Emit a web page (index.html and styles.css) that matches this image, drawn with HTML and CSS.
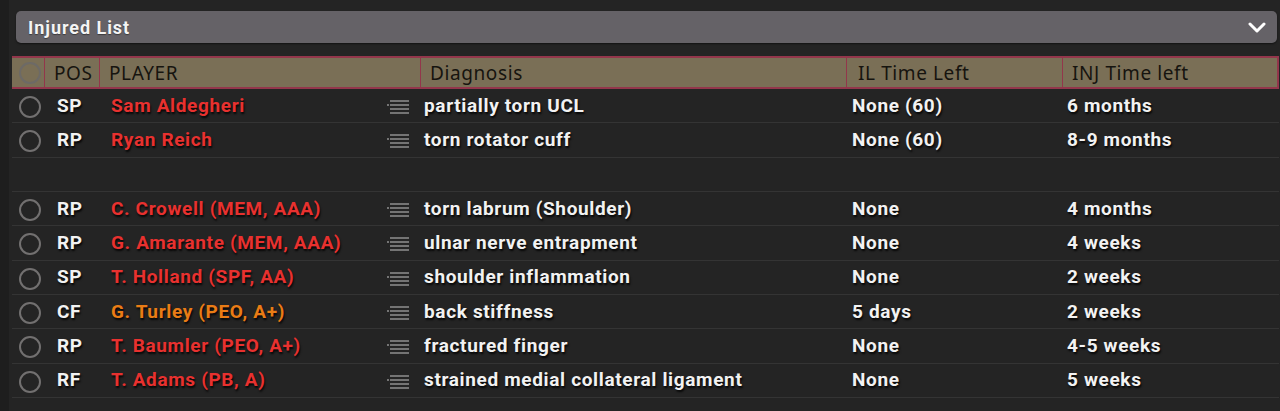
FILE: index.html
```html
<!DOCTYPE html>
<html>
<head>
<meta charset="utf-8">
<link rel="stylesheet" href="styles.css">
</head>
<body>
<div class="page">
  <div class="panel-bar">
    <span class="panel-title">Injured List</span>
    <svg class="chev" width="18" height="12" viewBox="0 0 18 12"><path d="M2 2 L9 9 L16 2" fill="none" stroke="#fff" stroke-width="3" stroke-linecap="round" stroke-linejoin="round"/></svg>
  </div>
  <div class="table">
    <div class="thead">
      <div class="th th-sel"><span class="radio radio-h"></span></div>
      <div class="th">POS</div>
      <div class="th">PLAYER</div>
      <div class="th">Diagnosis</div>
      <div class="th th-il">IL Time Left</div>
      <div class="th">INJ Time left</div>
    </div>

    <div class="row">
      <div class="c c-sel"><span class="radio"></span></div>
      <div class="c c-pos">SP</div>
      <div class="c c-name"><span class="red">Sam Aldegheri</span><span class="drag"><i></i><i></i><i></i><i></i></span></div>
      <div class="c c-diag">partially torn UCL</div>
      <div class="c c-il">None (60)</div>
      <div class="c c-inj">6 months</div>
    </div>
    <div class="row">
      <div class="c c-sel"><span class="radio"></span></div>
      <div class="c c-pos">RP</div>
      <div class="c c-name"><span class="red">Ryan Reich</span><span class="drag"><i></i><i></i><i></i><i></i></span></div>
      <div class="c c-diag">torn rotator cuff</div>
      <div class="c c-il">None (60)</div>
      <div class="c c-inj">8-9 months</div>
    </div>
    <div class="row row-empty"></div>
    <div class="row">
      <div class="c c-sel"><span class="radio"></span></div>
      <div class="c c-pos">RP</div>
      <div class="c c-name"><span class="red">C. Crowell (MEM, AAA)</span><span class="drag"><i></i><i></i><i></i><i></i></span></div>
      <div class="c c-diag">torn labrum (Shoulder)</div>
      <div class="c c-il">None</div>
      <div class="c c-inj">4 months</div>
    </div>
    <div class="row">
      <div class="c c-sel"><span class="radio"></span></div>
      <div class="c c-pos">RP</div>
      <div class="c c-name"><span class="red">G. Amarante (MEM, AAA)</span><span class="drag"><i></i><i></i><i></i><i></i></span></div>
      <div class="c c-diag">ulnar nerve entrapment</div>
      <div class="c c-il">None</div>
      <div class="c c-inj">4 weeks</div>
    </div>
    <div class="row">
      <div class="c c-sel"><span class="radio"></span></div>
      <div class="c c-pos">SP</div>
      <div class="c c-name"><span class="red">T. Holland (SPF, AA)</span><span class="drag"><i></i><i></i><i></i><i></i></span></div>
      <div class="c c-diag">shoulder inflammation</div>
      <div class="c c-il">None</div>
      <div class="c c-inj">2 weeks</div>
    </div>
    <div class="row">
      <div class="c c-sel"><span class="radio"></span></div>
      <div class="c c-pos">CF</div>
      <div class="c c-name"><span class="orange">G. Turley (PEO, A+)</span><span class="drag"><i></i><i></i><i></i><i></i></span></div>
      <div class="c c-diag">back stiffness</div>
      <div class="c c-il">5 days</div>
      <div class="c c-inj">2 weeks</div>
    </div>
    <div class="row">
      <div class="c c-sel"><span class="radio"></span></div>
      <div class="c c-pos">RP</div>
      <div class="c c-name"><span class="red">T. Baumler (PEO, A+)</span><span class="drag"><i></i><i></i><i></i><i></i></span></div>
      <div class="c c-diag">fractured finger</div>
      <div class="c c-il">None</div>
      <div class="c c-inj">4-5 weeks</div>
    </div>
    <div class="row">
      <div class="c c-sel"><span class="radio"></span></div>
      <div class="c c-pos">RF</div>
      <div class="c c-name"><span class="red">T. Adams (PB, A)</span><span class="drag"><i></i><i></i><i></i><i></i></span></div>
      <div class="c c-diag">strained medial collateral ligament</div>
      <div class="c c-il">None</div>
      <div class="c c-inj">5 weeks</div>
    </div>
  </div>
</div>
</body>
</html>
```

FILE: styles.css
```css
* { box-sizing: border-box; }
html, body {
  margin: 0;
  padding: 0;
  background: #242424;
  height: 411px;
  overflow: hidden;
}
.page {
  border-left: 9px solid #1e1e1e;
  height: 411px;
  padding: 11px 1px 0 3px;
  font-family: Roboto, "Liberation Sans", sans-serif;
}
.panel-bar {
  margin-left: 4px;
  margin-right: 2px;
  height: 32px;
  background: #656267;
  border-radius: 5px;
  box-shadow: 0 1px 2px rgba(0,0,0,0.5);
  display: flex;
  align-items: center;
  justify-content: space-between;
  padding: 0 12px 0 12px;
}
.panel-title {
  color: #f4f4f4;
  font-weight: 700;
  font-size: 18px;
  letter-spacing: 0.95px;
  text-shadow: 0 1px 1px rgba(0,0,0,0.4);
}
.chev { display: block; margin-top: 1px; margin-right: -1px; }

.table { margin-top: 13px; }
.thead, .row {
  display: grid;
  grid-template-columns: 32px 55px 321px 426px 216px 1fr;
}
.thead {
  height: 33px;
  background: #7a6f56;
  border-top: 2px solid #93364b;
  border-bottom: 2px solid #93364b;
  border-right: 2px solid #93364b;
}
.th {
  display: flex;
  align-items: center;
  padding-left: 9px;
  font-family: "Noto Sans", "Open Sans", sans-serif;
  font-size: 19px;
  letter-spacing: 0.6px;
  color: #16140f;
  border-left: 1px solid #93364b;
}
.th-sel { border-left: none; padding-left: 7px; }
.th-il { padding-left: 11px; }

.radio {
  display: block;
  width: 22px;
  height: 22px;
  border: 2px solid #727070;
  border-radius: 50%;
}
.radio-h { border-color: #6d6a66; }

.row {
  height: 34.33px;
  border-bottom: 1px solid #343434;
  color: #f2f2f2;
  font-size: 19px;
  font-weight: 700;
  letter-spacing: 0.65px;
  text-shadow: 1px 2px 2px rgba(0,0,0,0.85);
}
.c {
  display: flex;
  align-items: center;
  white-space: nowrap;
  padding-bottom: 1px;
}
.c-sel { padding-left: 7px; padding-top: 3px; padding-bottom: 0; }
.c-pos { padding-left: 13px; }
.c-name { padding-left: 12px; padding-right: 11px; justify-content: space-between; }
.c-diag { padding-left: 4px; }
.c-il { padding-left: 6px; }
.c-inj { padding-left: 5px; }

.red { color: #e8312f; }
.orange { color: #ea7c15; }

.drag {
  display: flex;
  flex-direction: column;
  gap: 2px;
  width: 22px;
  align-items: flex-end;
  margin-top: 4px;
}
.drag i {
  display: block;
  width: 19px;
  height: 2px;
  background: #747474;
}
.drag i:nth-child(2) {
  width: 22px;
  background: linear-gradient(to right, #747474 0 2px, transparent 2px 3px, #747474 3px);
}
```
